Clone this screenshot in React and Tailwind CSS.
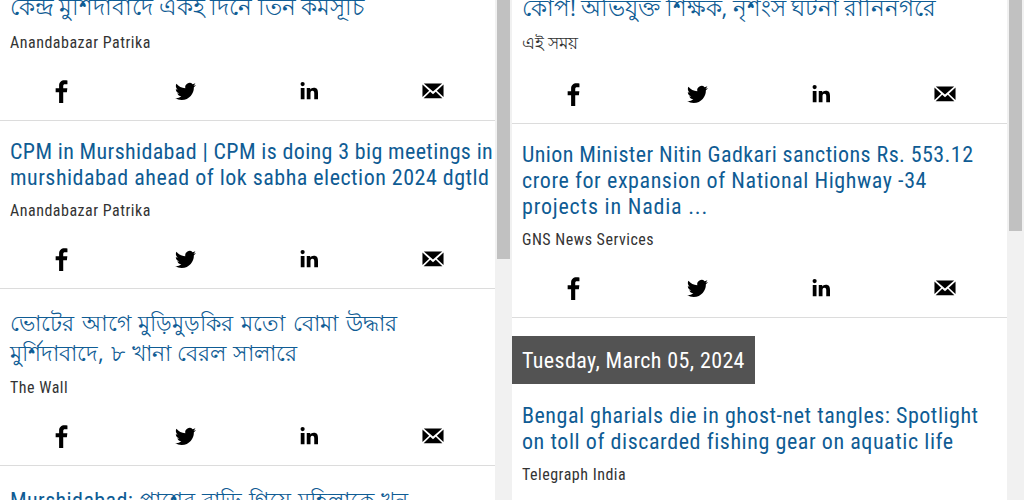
import React from "react";

const ICONS = [
	{
		name: "facebook",
		path: "M13.8 24V12.9h3.8l.5-4.200h-4.300V6.300c0-1.200.5-1.900 2-1.900h2.400V.5C17.800.3 16.500.2 15.100.2 11.800.2 9.500 2.200 9.500 5.800v2.900H5.900v4.200h3.600V24z",
		className: "h-[23px] w-[23px]",
	},
	{
		name: "twitter",
		path: "M23.95 4.57a10 10 0 0 1-2.82.78 4.96 4.96 0 0 0 2.16-2.72c-.95.55-2 .95-3.13 1.18a4.92 4.92 0 0 0-8.38 4.48C7.690 8.100 4.070 6.130 1.640 3.160a4.820 4.820 0 0 0-.67 2.480c0 1.710.87 3.210 2.190 4.100a4.900 4.900 0 0 1-2.230-.62v.06a4.920 4.920 0 0 0 3.950 4.830 5 5 0 0 1-2.210.08 4.940 4.940 0 0 0 4.600 3.420A9.870 9.870 0 0 1 0 19.540a13.990 13.990 0 0 0 7.560 2.210c9.050 0 14-7.500 14-13.990 0-.21 0-.42-.02-.63a9.940 9.940 0 0 0 2.410-2.560z",
		className: "h-[21px] w-[21px]",
	},
	{
		name: "linkedin",
		path: "M1 8h5v15H1zM3.500 0a2.800 2.800 0 1 1 0 5.600 2.800 2.800 0 0 1 0-5.600zM9 8h4.700v2.100c.7-1.300 2.300-2.500 4.700-2.500 4.600 0 5.600 3 5.600 7V23h-5v-7.600c0-1.900-.1-3.900-2.500-3.900S14 13.400 14 15.300V23H9z",
		className: "h-[18px] w-[18px]",
	},
	{
		name: "email",
		path: "M2 3.800h20L12 12.500zM.5 5l7.300 6.700L.5 18.600zM23.500 5l-7.300 6.700 7.300 6.900zM9 12.900l3 2.600 3-2.600 7.200 7.100H1.800z",
		className: "h-[22px] w-[22px]",
	},
];

const ShareRow = () => (
	<div className="grid h-[57px] grid-cols-4">
		{ICONS.map((icon) => (
			<a key={icon.name} aria-label={icon.name} className="flex items-center justify-center">
				<svg viewBox="0 0 24 24" fill="#000" className={icon.className}>
					<path d={icon.path} />
				</svg>
			</a>
		))}
	</div>
);

const Title = ({ lines, bengali }) => (
	<h3
		className={
			bengali
				? "pl-[10px] font-['Open_Sans','Noto_Sans',sans-serif] leading-[30.5px] [font-stretch:100%] whitespace-nowrap text-[#0f5c94]"
				: "pl-[10px] text-[22px] leading-[26px] whitespace-nowrap text-[#0f5c94]"
		}
	>
		{lines.map((line, i) => (
			<span key={i} className={`block ${line.spacing || ""}`}>
				{line.text}
			</span>
		))}
	</h3>
);

const NewsItem = ({ lines, source, bengali, bengaliSource, share = true }) => (
	<article className={share ? "border-b border-[#dcdcdc] pt-[18px]" : "pt-[19px]"}>
		<Title lines={lines} bengali={bengali} />
		<p
			className={
				bengaliSource
					? "h-[42px] pl-[10px] font-['Open_Sans','Noto_Sans',sans-serif] text-[17px] leading-[38px] [font-stretch:100%] text-[#333]"
					: "h-10 pl-[10px] text-[16px] leading-10 tracking-[0.5px] text-[#333]"
			}
		>
			{source}
		</p>
		{share && <ShareRow />}
	</article>
);

const Scrollbar = ({ thumb }) => (
	<div className="w-[17px] shrink-0 bg-[#f1f1f1] px-[2px]">
		<div className={`bg-[#c1c1c1] ${thumb}`} />
	</div>
);

const App = () => (
	<div className="flex h-[500px] w-[1024px] overflow-hidden bg-white font-[Roboto,'Open_Sans',sans-serif] [font-stretch:85%]">
		<section className="flex h-full w-[512px]">
			<div className="w-[495px] overflow-hidden">
				<div className="-mt-[26px]">
					<NewsItem
						bengali
						lines={[{ text: "কেন্দ্র মুর্শিদাবাদে একই দিনে তিন কর্মসূচি", spacing: "text-[22.6px] [word-spacing:-0.4px]" }]}
						source="Anandabazar Patrika"
					/>
					<NewsItem
						lines={[
							{ text: "CPM in Murshidabad | CPM is doing 3 big meetings in", spacing: "tracking-[0.36px]" },
							{ text: "murshidabad ahead of lok sabha election 2024 dgtld", spacing: "tracking-[0.49px]" },
						]}
						source="Anandabazar Patrika"
					/>
					<NewsItem
						bengali
						lines={[
							{ text: "ভোটের আগে মুড়িমুড়কির মতো বোমা উদ্ধার", spacing: "text-[22px] [word-spacing:2px]" },
							{ text: "মুর্শিদাবাদে, ৮ খানা বেরল সালারে", spacing: "text-[22px] [word-spacing:1.2px]" },
						]}
						source="The Wall"
					/>
					<NewsItem
						bengali
						lines={[
							{
								text: (
									<>
										<span className="font-[Roboto,sans-serif] tracking-[0.4px] [font-stretch:85%]">Murshidabad: </span>
										পাশের বাড়ি গিয়ে মহিলাকে খুন
									</>
								),
								spacing: "text-[22px] [word-spacing:1.2px]",
							},
						]}
						source=""
					/>
				</div>
			</div>
			<Scrollbar thumb="h-[259px]" />
		</section>

		<section className="flex h-full w-[512px]">
			<div className="w-[495px] overflow-hidden">
				<div className="-mt-[25px]">
					<NewsItem
						bengali
						bengaliSource
						lines={[{ text: "কোপ! অভিযুক্ত শিক্ষক, নৃশংস ঘটনা রানিনগরে", spacing: "text-[22.6px] [word-spacing:-0.6px]" }]}
						source="এই সময়"
					/>
					<NewsItem
						lines={[
							{ text: "Union Minister Nitin Gadkari sanctions Rs. 553.12", spacing: "tracking-[0.42px]" },
							{ text: "crore for expansion of National Highway -34", spacing: "tracking-[0.57px]" },
							{ text: "projects in Nadia ...", spacing: "tracking-[0.8px]" },
						]}
						source="GNS News Services"
					/>
					<div className="mt-[18px] h-12 w-[243px] bg-[#535353] pl-[10px] text-[22px] leading-[50px] tracking-[0.38px] whitespace-nowrap text-white">
						Tuesday, March 05, 2024
					</div>
					<NewsItem
						share={false}
						lines={[
							{ text: "Bengal gharials die in ghost-net tangles: Spotlight", spacing: "tracking-[0.52px]" },
							{ text: "on toll of discarded fishing gear on aquatic life", spacing: "tracking-[0.57px]" },
						]}
						source="Telegraph India"
					/>
				</div>
			</div>
			<Scrollbar thumb="h-[231px]" />
		</section>
	</div>
);

export default App;
